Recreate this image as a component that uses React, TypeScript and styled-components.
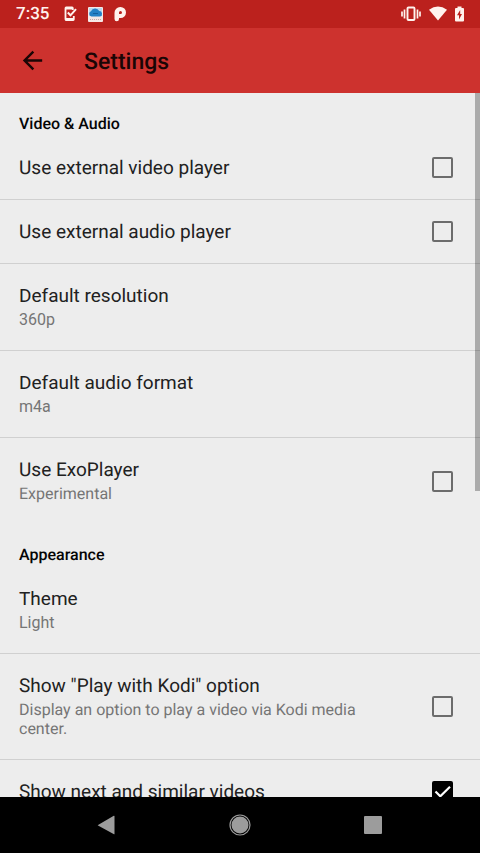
import React, { useState } from "react";
import styled, { createGlobalStyle } from "styled-components";

const GlobalStyle = createGlobalStyle`
  *, *::before, *::after { box-sizing: border-box; }
  body {
    margin: 0;
    background: #ededed;
    font-family: Roboto, "Noto Sans", sans-serif;
    text-rendering: geometricPrecision;
  }
`;

const Screen = styled.div`
  display: flex;
  flex-direction: column;
  height: 100vh;
  background: #ededed;
  color: #212121;
`;

const StatusBar = styled.div`
  display: flex;
  align-items: center;
  flex: none;
  height: 28px;
  padding: 0 16px;
  background: #bb211d;
  color: #fff3ee;
`;

const Clock = styled.span`
  width: 47px;
  font-size: 17px;
  font-weight: 500;
  line-height: 30px;
`;

const StatusGroup = styled.div<{ $gap: number }>`
  display: flex;
  align-items: center;
  gap: ${({ $gap }) => $gap}px;
`;

const Spacer = styled.div`
  flex: 1;
`;

const Toolbar = styled.header`
  display: flex;
  align-items: center;
  flex: none;
  height: 65px;
  padding: 0 16px;
  gap: 35px;
  background: #cd322e;
  color: #1b0505;
`;

const IconButton = styled.button`
  display: flex;
  align-items: center;
  justify-content: center;
  padding: 2px;
  border: 0;
  background: none;
  color: inherit;
  cursor: pointer;
`;

const PageTitle = styled.h1`
  margin: 0;
  padding-top: 2px;
  font-size: 23px;
  font-weight: 500;
  line-height: 32px;
`;

const Content = styled.div`
  position: relative;
  flex: 1;
  min-height: 0;
`;

const Scroller = styled.main`
  height: 100%;
  overflow-y: auto;
  scrollbar-width: none;
`;

const ScrollThumb = styled.div`
  position: absolute;
  top: 0;
  right: 0;
  width: 5px;
  height: 56.5%;
  background: rgba(0, 0, 0, 0.28);
  pointer-events: none;
`;

const SectionTitle = styled.h2`
  margin: 0;
  padding: 19px 19px 0;
  font-size: 16px;
  font-weight: 500;
  line-height: 24px;
  color: #050505;
`;

const rowStyles = `
  display: flex;
  align-items: center;
  width: 100%;
  padding: 19px 27px 19px 19px;
  border: 0;
  background: none;
  color: inherit;
  font-family: inherit;
  text-align: left;
  cursor: pointer;
`;

const CheckRow = styled.label`
  ${rowStyles}
`;

const ChoiceRow = styled.button`
  ${rowStyles}
`;

const SettingsList = styled.div`
  & > * + * {
    border-top: 1px solid #d0d0d0;
  }
`;

const RowText = styled.span`
  display: flex;
  flex-direction: column;
  flex: 1;
  padding-right: 40px;
`;

const RowTitle = styled.span`
  font-size: 19px;
  line-height: 25px;
`;

const RowSummary = styled.span`
  padding: 2px 0;
  font-size: 16px;
  line-height: 19px;
  color: #757575;
`;

const CheckBox = styled.input`
  appearance: none;
  flex: none;
  width: 21px;
  height: 21px;
  margin: 0;
  border: 2px solid #6c6c6c;
  border-radius: 2px;
  cursor: inherit;

  &:checked {
    border-color: #000;
    background: #000;
  }
`;

const CheckCell = styled.span`
  display: grid;
  flex: none;

  & > * {
    grid-area: 1 / 1;
  }
`;

const Tick = styled.svg`
  pointer-events: none;
`;

const NavBar = styled.nav`
  display: flex;
  align-items: center;
  justify-content: center;
  flex: none;
  height: 56px;
  gap: 107px;
  background: #000;
  color: #9c9c9c;
`;

interface CheckSettingProps {
  title: string;
  summary?: string;
  initial?: boolean;
}

function CheckSetting({ title, summary, initial = false }: CheckSettingProps) {
  const [checked, setChecked] = useState(initial);
  return (
    <CheckRow>
      <RowText>
        <RowTitle>{title}</RowTitle>
        {summary && <RowSummary>{summary}</RowSummary>}
      </RowText>
      <CheckCell>
        <CheckBox
          type="checkbox"
          checked={checked}
          onChange={(e) => setChecked(e.target.checked)}
        />
        {checked && (
          <Tick width="21" height="21" viewBox="0 0 21 21" fill="none" aria-hidden="true">
            <path d="M3.500 10.500l4.800 4.800L18 5.800" stroke="#fff" strokeWidth="2.200" />
          </Tick>
        )}
      </CheckCell>
    </CheckRow>
  );
}

function ChoiceSetting({ title, value }: { title: string; value: string }) {
  return (
    <ChoiceRow type="button">
      <RowText>
        <RowTitle>{title}</RowTitle>
        <RowSummary>{value}</RowSummary>
      </RowText>
    </ChoiceRow>
  );
}

export default function App() {
  return (
    <>
      <GlobalStyle />
      <Screen>
        <StatusBar>
          <Clock>7:35</Clock>
          <StatusGroup $gap={10}>
            <svg width="15" height="16" viewBox="0 0 15 16" fill="none" stroke="currentColor" aria-hidden="true">
              <path d="M9.800 4V2.200Q9.800 1.500 9.100 1.500H3.200Q2.500 1.500 2.500 2.200V13.300Q2.500 14 3.200 14H10.100Q10.800 14 10.800 13.300V10" strokeWidth="1.800" />
              <path d="M2.500 2.300H10M2.500 13.200H10.500" strokeWidth="2.400" />
              <path d="M4.800 6.500L7.500 9.300L13 3.200" strokeWidth="2" />
            </svg>
            <svg width="15" height="15" viewBox="0 0 15 15" aria-hidden="true">
              <rect width="15" height="15" rx="1" fill="#f6e8e6" />
              <path d="M1 1h13v8H1z" fill="#b9d8ec" />
              <path d="M3.500 9.500A2.700 2.700 0 0 1 3 4.300A4.500 4.500 0 0 1 11.200 4A2.800 2.800 0 0 1 12 9.500Z" fill="#2580c5" />
              <path d="M5 6.500h5" stroke="#155f9e" />
              <path d="M2 12.500h11" stroke="#c5aaa8" strokeDasharray="1 1" />
            </svg>
            <svg width="15" height="16" viewBox="0 0 15 16" aria-hidden="true">
              <path fill="currentColor" fillRule="evenodd" d="M1.500 7A5.700 5.700 0 0 1 7.500 1A5.500 5.500 0 0 1 13 6.500A5.500 5.500 0 0 1 7.500 12H6V13A2.200 2.200 0 0 1 1.500 13ZM7.500 5A1.500 1.500 0 0 0 6 6.500V8H7.500A1.500 1.500 0 0 0 7.500 5Z" />
            </svg>
          </StatusGroup>
          <Spacer />
          <StatusGroup $gap={8}>
            <svg width="20" height="16" viewBox="0 0 20 16" fill="none" stroke="currentColor" aria-hidden="true">
              <rect x="6.500" y="1.500" width="7" height="12.500" rx="1" strokeWidth="1.900" />
              <path d="M3.500 3.500v9M16.500 3.500v9M1 5.500v5M19 5.500v5" strokeWidth="1.700" />
            </svg>
            <svg width="18" height="16" viewBox="0 0 18 16" fill="currentColor" aria-hidden="true">
              <path d="M9 14.500L0 3.800Q9-2.800 18 3.800Z" />
            </svg>
            <svg width="9" height="16" viewBox="0 0 9 16" aria-hidden="true">
              <path fill="currentColor" d="M2.500 2V.5h4V2H8q1 0 1 1v11.500q0 1-1 1H1q-1 0-1-1V3q0-1 1-1z" />
              <path fill="#bb211d" d="M5.200 4L2 9.300h2V13.500L7 8H5.200z" />
            </svg>
          </StatusGroup>
        </StatusBar>
        <Toolbar>
          <IconButton type="button" aria-label="Back">
            <svg width="29" height="29" viewBox="0 0 24 24" fill="currentColor" aria-hidden="true">
              <path d="M20 11H7.830l5.590-5.590L12 4l-8 8 8 8 1.410-1.410L7.830 13H20v-2z" />
            </svg>
          </IconButton>
          <PageTitle>Settings</PageTitle>
        </Toolbar>
        <Content>
          <Scroller>
            <section>
              <SectionTitle>Video &amp; Audio</SectionTitle>
              <SettingsList>
                <CheckSetting title="Use external video player" />
                <CheckSetting title="Use external audio player" />
                <ChoiceSetting title="Default resolution" value="360p" />
                <ChoiceSetting title="Default audio format" value="m4a" />
                <CheckSetting title="Use ExoPlayer" summary="Experimental" />
              </SettingsList>
            </section>
            <section>
              <SectionTitle>Appearance</SectionTitle>
              <SettingsList>
                <ChoiceSetting title="Theme" value="Light" />
                <CheckSetting
                  title={'Show "Play with Kodi" option'}
                  summary="Display an option to play a video via Kodi media center."
                />
                <CheckSetting title="Show next and similar videos" initial />
              </SettingsList>
            </section>
          </Scroller>
          <ScrollThumb />
        </Content>
        <NavBar>
          <IconButton type="button" aria-label="Back">
            <svg width="22" height="22" viewBox="0 0 22 22" fill="currentColor" aria-hidden="true">
              <path d="M18.500 2.300V20Q18.500 20.500 18 20.200L2 11.500Q1.500 11.200 2 10.900L17.800 1.800Q18.500 1.500 18.500 2.300Z" />
            </svg>
          </IconButton>
          <IconButton type="button" aria-label="Home">
            <svg width="22" height="22" viewBox="0 0 22 22" aria-hidden="true">
              <circle cx="11" cy="11" r="10" fill="none" stroke="currentColor" strokeWidth="1.200" />
              <circle cx="11" cy="11" r="8.500" fill="currentColor" />
            </svg>
          </IconButton>
          <IconButton type="button" aria-label="Recent apps">
            <svg width="22" height="22" viewBox="0 0 22 22" fill="currentColor" aria-hidden="true">
              <rect x="2" y="2" width="18" height="18" rx="1" />
            </svg>
          </IconButton>
        </NavBar>
      </Screen>
    </>
  );
}
